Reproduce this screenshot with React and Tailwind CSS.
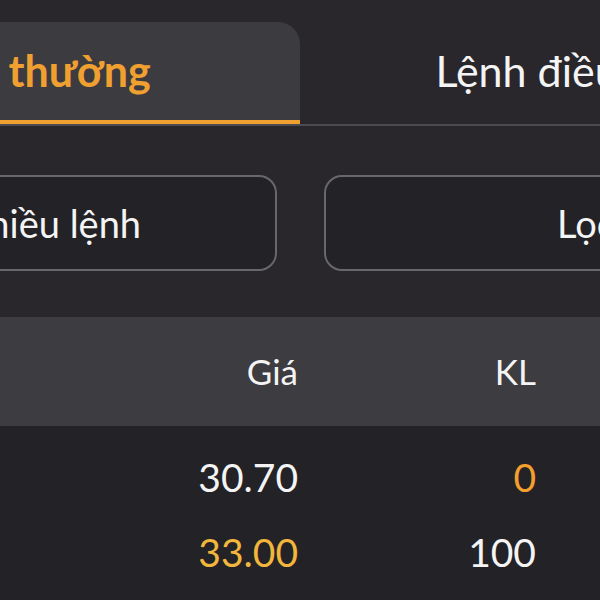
export default function App() {
  const rows = [
    { price: '30.70', priceColor: 'text-[#f4f4f4]', vol: '0', volColor: 'text-[#f29f2e]' },
    { price: '33.00', priceColor: 'text-[#f2b63c]', vol: '100', volColor: 'text-[#f4f4f4]' },
  ];

  return (
    <div className="w-[600px] h-[600px] overflow-hidden bg-[#29272c] font-['Lato',sans-serif]">
      {/* tabs */}
      <div className="pt-[22px] border-b-2 border-[#4b4a4f]">
        <div className="flex ml-[-244px] w-[1088px]">
          <div className="w-[544px] h-[102px] bg-[#3c3b40] rounded-tr-[22px] border-b-4 border-[#f0a030] flex items-center justify-center">
            <span className="text-[43px] font-bold text-[#f0a030]">Lệnh thường</span>
          </div>
          <div className="w-[544px] h-[102px] flex items-center justify-center pb-[4px]">
            <span className="text-[43px] text-[#f4f4f4]">Lệnh điều kiện</span>
          </div>
        </div>
      </div>

      {/* actions */}
      <div className="pt-[49px] pb-[46px]">
        <div className="flex gap-[47px] ml-[-247px] w-[1200px]">
          <button className="w-[524px] h-[96px] rounded-[18px] border-2 border-[#68676c] bg-[#232226] text-[38px] text-[#f4f4f4]">
            Hủy nhiều lệnh
          </button>
          <button className="w-[524px] h-[96px] rounded-[18px] border-2 border-[#68676c] bg-[#232226] text-[38px] text-[#f4f4f4]">
            Lọc
          </button>
        </div>
      </div>

      {/* table */}
      <div className="grid grid-cols-[298px_238px_1fr] h-[109px] items-center bg-[#3d3c40] text-[35px] text-[#f4f4f4]">
        <div className="text-right">Giá</div>
        <div className="text-right">KL</div>
        <div />
      </div>
      <div className="bg-[#232226] h-full pt-[14px]">
        {rows.map((r) => (
          <div key={r.price} className="grid grid-cols-[298px_238px_1fr] h-[75px] items-center text-[39px]">
            <div className={`text-right ${r.priceColor}`}>{r.price}</div>
            <div className={`text-right ${r.volColor}`}>{r.vol}</div>
            <div />
          </div>
        ))}
      </div>
    </div>
  );
}
